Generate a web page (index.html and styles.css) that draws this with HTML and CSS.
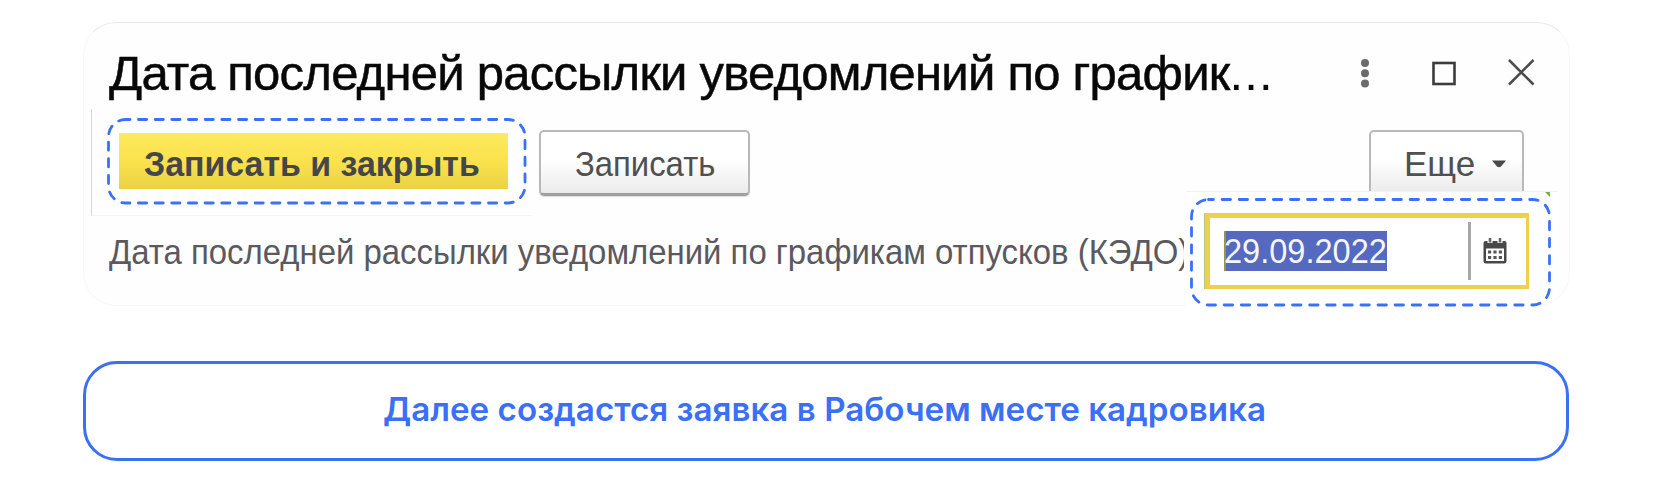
FILE: index.html
```html
<!DOCTYPE html>
<html lang="ru">
<head>
<meta charset="utf-8">
<title>Дата последней рассылки</title>
<link rel="stylesheet" href="styles.css">
</head>
<body>
<main class="page">
  <section class="window">
    <header class="titlebar">
      <h1 class="title">Дата последней рассылки уведомлений по график<span class="dots">...</span></h1>
      <svg class="controls" width="180" height="34" viewBox="0 0 180 34">
        <g fill="#6b6b6b"><circle cx="9" cy="7" r="4"/><circle cx="9" cy="17.200" r="4"/><circle cx="9" cy="27.400" r="4"/></g>
        <rect x="77.500" y="7" width="21" height="21" fill="none" stroke="#3c3c3c" stroke-width="2.600"/>
        <path d="M153 4l24.500 24.500M177.500 4L153 28.500" fill="none" stroke="#4c4c4c" stroke-width="2.500"/>
      </svg>
    </header>
    <div class="toolbar">
      <div class="primary-area">
        <button class="primary"><span class="primary-label">Записать и закрыть</span></button>
        <svg class="frame" width="420" height="87"><rect x="1.500" y="1.500" width="416.500" height="83.500" rx="17"/></svg>
      </div>
      <button class="secondary"><span class="secondary-label">Записать</span></button>
      <button class="more"><span class="more-label">Еще</span><svg width="16" height="8" viewBox="0 0 16 8"><path d="M1 0.500h14L10 6.500Q8 8 6 6.500z" fill="#4a4a4a"/></svg></button>
    </div>
    <div class="field-row">
      <div class="label-clip"><span class="label">Дата последней рассылки уведомлений по графикам отпусков (КЭДО)</span></div>
      <div class="field-area">
        <div class="field">
          <span class="selection"><span class="date">29.09.2022</span></span>
          <span class="divider"></span>
          <svg class="calendar" width="24" height="26" viewBox="0 0 24 26">
            <path d="M2.500 3H21.500Q23.500 3 23.500 5V23Q23.500 25.500 21 25.500H3Q.5 25.500 .5 23V5Q.5 3 2.500 3z" fill="#484848"/>
            <path d="M3 10.500h18v12.500H3z" fill="#fff"/>
            <path d="M4.500 0h5v5h-5zM14.500 0h5v5h-5z" fill="#fff"/>
            <path d="M5.700 0h2.600v4.500H5.700zM15.700 0h2.600v4.500h-2.600z" fill="#666"/>
            <path d="M5 12.500h3.200v3H5zM10.400 12.500h3.200v3h-3.200zM15.800 12.500H19v3h-3.200zM5 18h3.200v3H5zM10.400 18h3.200v3h-3.200zM15.800 18H19v3h-3.200z" fill="#555"/>
          </svg>
        </div>
        <svg class="frame frame-field" width="361" height="109"><rect x="1.500" y="1.500" width="358" height="105.500" rx="17"/></svg>
        <svg class="corner" width="5" height="5"><path d="M0 0h5v5z" fill="#72b43c"/></svg>
      </div>
    </div>
  </section>
  <section class="notice"><p class="notice-text">Далее создастся заявка в Рабочем месте кадровика</p></section>
</main>
</body>
</html>
```
FILE: styles.css
```css
* { box-sizing: border-box; }
body { margin: 0; background: #fff; font-family: "Liberation Sans", Arial, sans-serif; }
.page { width: 1653px; height: 480px; padding: 22px 83px 0; overflow: hidden; }
.window { width: 1487px; height: 284px; border: 1px solid #f8f8f8; border-top-color: #e9e9e9; border-radius: 33px; background: #fefefe; }
.titlebar { height: 86px; padding: 0 33px 0 25px; display: flex; justify-content: space-between; align-items: flex-start; }
.title { margin: 22px 0 0; font-size: 49px; line-height: 56px; font-weight: 400; color: #080808; white-space: nowrap; letter-spacing: -0.76px; width: 1180px; -webkit-text-stroke: 0.5px #080808; }
.dots { letter-spacing: 1.2px; -webkit-text-stroke: 0; }
.controls { flex: none; margin-top: 33px; }
button { font: inherit; padding: 0; white-space: nowrap; }
.toolbar { display: flex; align-items: flex-start; height: 107px; width: 1433px; margin-left: 7px; }
.primary-area { position: relative; width: 442px; height: 107px; border-left: 1px solid #cfe0b4; border-bottom: 1px solid #f5f5f3; padding: 24px 0 0 27px; flex: none; }
.primary { display: flex; align-items: center; width: 389px; height: 56px; border: 0; padding: 5px 0 0 25px; background: linear-gradient(#fdea5f, #fbe24d 50%, #e9d244); color: #45464a; font-weight: 700; }
.primary-label { font-size: 35px; line-height: 40px; transform: scaleX(.968); transform-origin: left; }
.frame { position: absolute; left: 15px; top: 8.5px; fill: none; stroke: #3a70fa; stroke-width: 2.8; stroke-dasharray: 8.200 8.470; stroke-dashoffset: 3.700; stroke-linecap: round; }
.secondary, .more { display: flex; align-items: center; border: 2px solid #b9b9b9; border-radius: 5px; color: #505050; background: linear-gradient(#fff 45%, #ebebeb); flex: none; }
.secondary { width: 211px; height: 66px; margin: 21px 0 0 6px; border-bottom: 3px solid #a0a0a0; padding: 2px 0 0 34px; box-shadow: 0 1px 1px #ddd; }
.secondary-label, .more-label { font-size: 35px; line-height: 40px; }
.secondary-label { transform: scaleX(.938); transform-origin: left; }
.more { width: 155px; height: 62px; margin: 21px 0 0 auto; padding: 4px 0 0 33px; border-bottom: 0; border-radius: 5px 5px 0 0; gap: 16px; }
.field-row { display: flex; align-items: flex-start; }
.label-clip { width: 1075px; height: 60px; margin: 16px 0 0 25px; overflow: hidden; flex: none; }
.label { font-size: 35px; line-height: 40px; color: #5b5960; white-space: nowrap; display: block; width: max-content; transform: scaleX(.94); transform-origin: left; }
.field-area { position: relative; flex: none; width: 372px; height: 118px; margin-top: -25px; margin-left: 2px; padding: 21px 0 0 19px; background: #fff; border-top: 1px solid #f2f2f2; border-radius: 0 0 33px 0; }
.field { display: flex; align-items: center; width: 324px; height: 76px; border: 5px solid #efcf4b; border-width: 5px 3px 4px 5px; background: #fff; box-shadow: -1px 0 #bbc878; padding: 0 0 2px 14px; }
.field-area .frame { left: 4px; top: 5.5px; }
.frame-field { stroke-dasharray: 8.400 8.690; stroke-dashoffset: 3.500; }
.selection { display: block; width: 163px; height: 40px; background: #5669c0; color: #f4f6fb; border-left: 2px solid #a09048; }
.date { display: block; width: max-content; font-size: 35px; line-height: 40px; white-space: nowrap; transform: scaleX(.93); transform-origin: left; margin-left: -2px; }
.divider { width: 3px; height: 58px; margin-left: 81px; background: #a8a8a8; }
.calendar { margin-left: 12px; }
.corner { position: absolute; left: 359px; top: 0; }
.notice { margin-top: 55px; width: 1486px; height: 100px; border: 2.8px solid #3a70f5; border-radius: 34px; display: flex; align-items: center; justify-content: center; }
.notice { border-width: 3px; }
.notice-text { margin: 0 3px 5px 0; font-family: Inter, sans-serif; font-weight: 600; font-size: 33.2px; line-height: 40px; color: #3b6ff6; white-space: nowrap; }
```
